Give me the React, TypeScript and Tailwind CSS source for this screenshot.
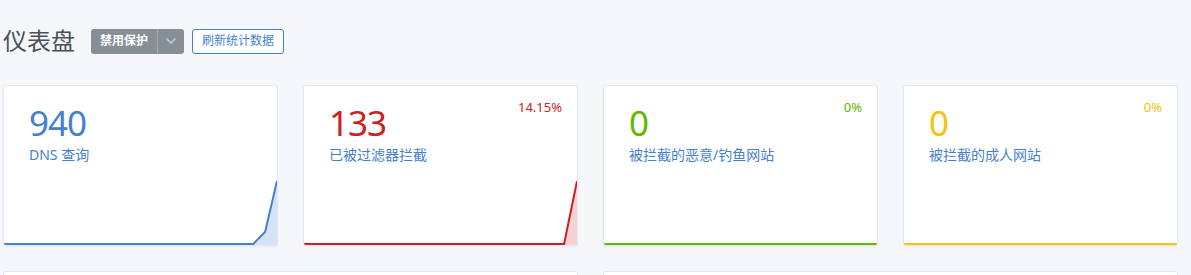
import React from "react";

type Card = {
  value: string;
  label: string;
  percent?: string;
  color: string;
  fill: string;
  points: string;
  area: string;
  valueClass: string;
  percentClass: string;
};

const cards: Card[] = [
  {
    value: "940",
    label: "DNS 查询",
    color: "#467fcf",
    fill: "rgba(70,127,207,0.22)",
    points: "0,63 251,63 263,51 275,0",
    area: "0,63 251,63 263,51 275,0 275,64 0,64",
    valueClass: "text-[#467fcf]",
    percentClass: "text-[#467fcf]",
  },
  {
    value: "133",
    label: "已被过滤器拦截",
    percent: "14.15%",
    color: "#cd201f",
    fill: "rgba(205,32,31,0.2)",
    points: "0,63 262,63 275,0",
    area: "0,63 262,63 275,0 275,64 0,64",
    valueClass: "text-[#cd201f]",
    percentClass: "text-[#cd201f]",
  },
  {
    value: "0",
    label: "被拦截的恶意/钓鱼网站",
    percent: "0%",
    color: "#5eba00",
    fill: "rgba(94,186,0,0.2)",
    points: "0,63 275,63",
    area: "0,63 275,63 275,64 0,64",
    valueClass: "text-[#5eba00]",
    percentClass: "text-[#5eba00]",
  },
  {
    value: "0",
    label: "被拦截的成人网站",
    percent: "0%",
    color: "#f1c40f",
    fill: "rgba(241,196,15,0.2)",
    points: "0,63 275,63",
    area: "0,63 275,63 275,64 0,64",
    valueClass: "text-[#f1c40f]",
    percentClass: "text-[#f1c40f]",
  },
];

function StatCard({ c }: { c: Card }) {
  return (
    <div className="flex h-[161px] flex-col overflow-hidden rounded-[3px] border border-[#e3e7ee] bg-white shadow-[0_1px_2px_rgba(0,0,0,0.05)]">
      <div className="flex items-start justify-between pl-[25px] pr-[15px] pt-[11px]">
        <div className="pt-[6px]">
          <div className={`text-[35px] leading-[40px] font-normal tracking-[-1px] ${c.valueClass}`}>{c.value}</div>
          <div className="mt-[2px] text-[14px] leading-[20px] text-[#467fcf]">{c.label}</div>
        </div>
        {c.percent ? (
          <div className={`text-[13px] leading-[20px] ${c.percentClass}`}>{c.percent}</div>
        ) : null}
      </div>
      <div className="mt-auto">
        <svg viewBox="0 0 275 64" preserveAspectRatio="none" className="block h-[64px] w-full">
          <polygon points={c.area} fill={c.fill} />
          <polyline points={c.points} fill="none" stroke={c.color} strokeWidth="2" />
        </svg>
      </div>
    </div>
  );
}

export default function App() {
  return (
    <div
      className="min-h-[275px] overflow-hidden bg-[#f5f7fb] pl-[3px] pr-[13px] pt-[26px]"
      style={{ fontFamily: '"Noto Sans", "Noto Sans CJK SC", sans-serif' }}
    >
      <div className="flex items-center">
        <h1 className="text-[24px] leading-[30px] font-normal text-[#495057]">仪表盘</h1>
        <div className="ml-[16px] flex h-[25px] overflow-hidden rounded-[3px] bg-[#868e96] text-white">
          <div className="flex items-center px-[9px] text-[12px] font-bold">禁用保护</div>
          <div className="flex w-[27px] items-center justify-center border-l border-[#a4abb2]">
            <svg width="12" height="8" viewBox="0 0 12 8">
              <polyline points="1.5,1.5 6,6 10.5,1.5" fill="none" stroke="#c3c8cd" strokeWidth="1.6" />
            </svg>
          </div>
        </div>
        <button className="ml-[8px] flex h-[25px] items-center rounded-[3px] border border-[#467fcf] bg-white px-[9px] text-[12px] text-[#467fcf]">
          刷新统计数据
        </button>
      </div>
      <div className="mt-[29px] grid grid-cols-4 gap-[25px]">
        {cards.map((c, i) => (
          <StatCard key={i} c={c} />
        ))}
      </div>
      <div className="mt-[25px] grid grid-cols-2 gap-[25px]">
        <div className="h-[120px] rounded-[3px] border border-[#e3e7ee] bg-white" />
        <div className="h-[120px] rounded-[3px] border border-[#e3e7ee] bg-white" />
      </div>
    </div>
  );
}
